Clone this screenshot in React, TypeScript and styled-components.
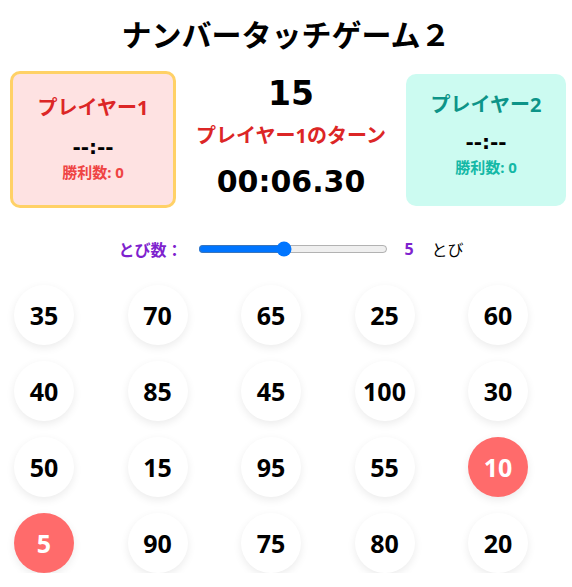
import React, { useState } from 'react'
import styled, { createGlobalStyle } from 'styled-components'

const GlobalStyle = createGlobalStyle`
  body {
    margin: 0;
    background: #fff;
    font-family: "Noto Sans", "Noto Sans CJK JP", sans-serif;
    color: #000;
  }
`

const Page = styled.div`
  width: 572px;
`

const Title = styled.h1`
  margin: 0;
  padding-top: 13px;
  font-family: "Noto Sans CJK JP", sans-serif;
  font-size: 30px;
  line-height: 40px;
  font-weight: 700;
  text-align: center;
`

const Scoreboard = styled.div`
  display: flex;
  justify-content: space-between;
  align-items: center;
  margin-top: 18px;
  padding: 0 6px 0 10px;
`

const PlayerBox = styled.div<{ $active?: boolean; $bg: string }>`
  width: 160px;
  box-sizing: content-box;
  background: ${(p) => p.$bg};
  border-radius: 10px;
  text-align: center;
  border: ${(p) => (p.$active ? '3px solid #ffd166' : 'none')};
  padding: ${(p) => (p.$active ? '19px 0 22px' : '16px 0 28px')};
`

const PlayerName = styled.div<{ $color: string }>`
  font-size: 20px;
  line-height: 30px;
  font-weight: 700;
  color: ${(p) => p.$color};
`

const PlayerTime = styled.div<{ $active?: boolean }>`
  margin-top: ${(p) => (p.$active ? '9px' : '7px')};
  font-family: "DejaVu Sans", sans-serif;
  font-size: 20px;
  line-height: 30px;
  font-weight: 700;
`

const Wins = styled.div<{ $color: string }>`
  font-size: 15px;
  line-height: 21px;
  font-weight: 700;
  color: ${(p) => p.$color};
`

const Center = styled.div`
  display: flex;
  flex-direction: column;
  align-items: center;
  padding-bottom: 4px;
`

const Target = styled.div`
  font-family: "DejaVu Sans", sans-serif;
  font-size: 33px;
  line-height: 40px;
  font-weight: 700;
`

const Turn = styled.div`
  margin-top: 9px;
  font-size: 20px;
  line-height: 26px;
  font-weight: 700;
  color: #dc2626;
`

const Timer = styled.div`
  margin-top: 13px;
  font-family: "DejaVu Sans", sans-serif;
  font-size: 30px;
  line-height: 40px;
  font-weight: 700;
`

const SkipRow = styled.div`
  display: flex;
  justify-content: center;
  align-items: center;
  gap: 14px;
  margin-top: 29px;
  padding-left: 10px;
  height: 24px;
`

const SkipLabel = styled.label`
  font-size: 16px;
  font-weight: 700;
  color: #7e22ce;
`

const Slider = styled.input`
  width: 190px;
  margin: 0 2px;
  accent-color: #0075ff;
`

const SkipValue = styled.span`
  font-size: 16px;
  font-weight: 700;
  color: #7e22ce;
`

const SkipUnit = styled.span`
  margin-left: 4px;
  font-size: 16px;
`

const Board = styled.div`
  display: grid;
  grid-template-columns: repeat(5, 60px);
  column-gap: 53.5px;
  row-gap: 16px;
  margin-top: 24px;
  padding-left: 14px;
`

const Cell = styled.button<{ $done?: boolean }>`
  width: 60px;
  height: 60px;
  padding: 0;
  border: none;
  border-radius: 50%;
  display: flex;
  align-items: center;
  justify-content: center;
  background: ${(p) => (p.$done ? '#ff6b6b' : '#fff')};
  color: ${(p) => (p.$done ? '#fff' : '#000')};
  box-shadow: 0 3px 8px rgba(0, 0, 0, 0.08);
  font-family: "Noto Sans", sans-serif;
  font-size: 25px;
  font-weight: 700;
  cursor: pointer;
`

const numbers = [35, 70, 65, 25, 60, 40, 85, 45, 100, 30, 50, 15, 95, 55, 10, 5, 90, 75, 80, 20]
const done = [5, 10]

export default function App() {
  const [skip, setSkip] = useState(5)

  return (
    <Page>
      <GlobalStyle />
      <Title>ナンバータッチゲーム２</Title>

      <Scoreboard>
        <PlayerBox $active $bg="#fee2e2">
          <PlayerName $color="#dc2626">プレイヤー1</PlayerName>
          <PlayerTime $active>--:--</PlayerTime>
          <Wins $color="#ef4444">勝利数: 0</Wins>
        </PlayerBox>

        <Center>
          <Target>15</Target>
          <Turn>プレイヤー1のターン</Turn>
          <Timer>00:06.30</Timer>
        </Center>

        <PlayerBox $bg="#ccfbf1">
          <PlayerName $color="#0d9488">プレイヤー2</PlayerName>
          <PlayerTime>--:--</PlayerTime>
          <Wins $color="#14b8a6">勝利数: 0</Wins>
        </PlayerBox>
      </Scoreboard>

      <SkipRow>
        <SkipLabel htmlFor="skip">とび数：</SkipLabel>
        <Slider
          id="skip"
          type="range"
          min={1}
          max={10}
          value={skip}
          onChange={(e) => setSkip(Number(e.target.value))}
        />
        <SkipValue>{skip}</SkipValue>
        <SkipUnit>とび</SkipUnit>
      </SkipRow>

      <Board>
        {numbers.map((n) => (
          <Cell key={n} $done={done.includes(n)}>
            {n}
          </Cell>
        ))}
      </Board>
    </Page>
  )
}
